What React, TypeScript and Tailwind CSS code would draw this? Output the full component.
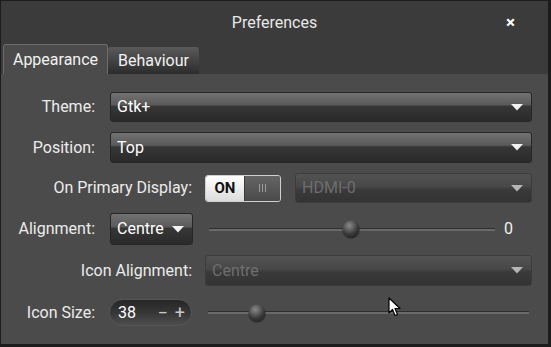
import React from "react";

const font = { fontFamily: "Roboto, 'Liberation Sans', sans-serif" };

function Arrow({ disabled }: { disabled?: boolean }) {
  return (
    <svg width="12" height="7" viewBox="0 0 12 7" className="shrink-0">
      <path d="M0 0 H12 L6 6.5 Z" fill={disabled ? "#b5b5b5" : "#f2f2f2"} />
    </svg>
  );
}

function Combo({ text, disabled, className }: { text: string; disabled?: boolean; className: string }) {
  return (
    <div
      className={`relative flex h-full items-center justify-between rounded-[3px] border pl-[6px] pr-[8px] ${
        disabled
          ? "border-[#3c3c3c] bg-[linear-gradient(#535353,#474747_45%,#3a3a3a_55%,#333333)] text-[#6e6e6e]"
          : "border-[#262626] bg-[linear-gradient(#727272,#5a5a5a_42%,#363636_48%,#2a2a2a)] text-white"
      } ${className}`}
    >
      <span className="text-[16px] leading-none">{text}</span>
      <Arrow disabled={disabled} />
    </div>
  );
}

function Slider({ pos, className }: { pos: number; className: string }) {
  return (
    <div className={`relative flex h-full items-center ${className}`}>
      <div className="h-[3px] w-full border-t border-[#2e2e2e] bg-[#6a6a6a]" />
      <div
        className="absolute top-1/2 h-[17px] w-[17px] -translate-x-1/2 -translate-y-1/2 rounded-full bg-[radial-gradient(circle_at_40%_30%,#8a8a8a,#3a3a3a_55%,#151515)] shadow-[0_1px_1px_rgba(0,0,0,0.6)]"
        style={{ left: `${pos}%` }}
      />
    </div>
  );
}

function Label({ text, w }: { text: string; w: string }) {
  return <div className={`${w} shrink-0 text-right text-[16px] text-[#ececec]`}>{text}</div>;
}

export default function App() {
  return (
    <div className="relative h-[347px] w-[551px] overflow-hidden bg-[#1c1c1c] p-[1px] pb-[3px] pr-[3px]" style={font}>
      <div className="flex h-full flex-col bg-[#3b3b3b]">
        {/* title */}
        <div className="relative flex h-[42px] items-center justify-center pt-[2px]">
          <span className="text-[16px] text-[#e8e8e8]">Preferences</span>
          <span className="absolute right-[33px] top-[13px] text-[17px] font-bold leading-none text-white">×</span>
        </div>

        {/* tabs */}
        <div className="flex items-end pl-[2px] pt-[1px]">
          <div className="flex h-[30px] w-[105px] items-center justify-center rounded-t-[3px] border border-b-0 border-[#6c6c6c] bg-[#4b4b4b] pt-[1px] text-[16px] text-[#f2f2f2]">
            Appearance
          </div>
          <div className="flex h-[27px] w-[91px] items-center justify-center rounded-t-[3px] bg-[linear-gradient(#5a5a5a,#2c2c2c)] text-[16px] text-[#f2f2f2]">
            Behaviour
          </div>
        </div>

        {/* content */}
        <div className="flex flex-1 flex-col gap-[10px] bg-[#4b4b4b] pr-[16px] pt-[18px]">
          <div className="flex h-[30px] items-center gap-[15px]">
            <Label text="Theme:" w="w-[94px]" />
            <Combo text="Gtk+" className="flex-1" />
          </div>
          <div className="flex h-[31px] items-center gap-[15px]">
            <Label text="Position:" w="w-[94px]" />
            <Combo text="Top" className="flex-1" />
          </div>
          <div className="flex h-[30px] items-center gap-[13px]">
            <Label text="On Primary Display:" w="w-[191px]" />
            <div className="flex h-[27px] w-[76px] shrink-0 overflow-hidden rounded-[3px] border border-[#d0d0d0]">
              <div className="flex w-[38px] items-center justify-center bg-[linear-gradient(#ffffff,#dcdcdc)] text-[15px] font-bold text-[#111]">
                ON
              </div>
              <div className="flex flex-1 items-center justify-center gap-[2px] border-l border-[#3a3a3a] bg-[linear-gradient(#646464,#4a4a4a)]">
                <span className="h-[8px] w-[1px] bg-[#9a9a9a]" />
                <span className="h-[8px] w-[1px] bg-[#9a9a9a]" />
                <span className="h-[8px] w-[1px] bg-[#9a9a9a]" />
              </div>
            </div>
            <div className="h-full flex-1 pl-[1px]">
              <Combo text="HDMI-0" disabled className="w-full" />
            </div>
          </div>
          <div className="flex h-[32px] items-center gap-[15px]">
            <Label text="Alignment:" w="w-[94px]" />
            <Combo text="Centre" className="w-[83px] shrink-0" />
            <Slider pos={49.5} className="ml-[1px] w-[286px] shrink-0" />
            <span className="ml-[-10px] pl-[4px] text-[16px] text-[#f0f0f0]">0</span>
          </div>
          <div className="flex h-[31px] items-center gap-[13px]">
            <Label text="Icon Alignment:" w="w-[191px]" />
            <Combo text="Centre" disabled className="flex-1" />
          </div>
          <div className="mt-[3px] flex h-[27px] items-center gap-[14px]">
            <Label text="Icon Size:" w="w-[94px]" />
            <div className="flex h-full w-[83px] shrink-0 items-center justify-between rounded-full border border-[#555] bg-[linear-gradient(#262626,#3a3a3a_60%,#4e4e4e)] pl-[8px] pr-[6px]">
              <span className="text-[16px] text-white">38</span>
              <span className="flex gap-[7px] text-[18px] leading-none text-[#c8c8c8]">
                <span>−</span>
                <span>+</span>
              </span>
            </div>
            <Slider pos={15} className="ml-[2px] flex-1 pr-[3px]" />
          </div>
        </div>
      </div>

      {/* mouse pointer */}
      <svg className="absolute left-[388px] top-[297px]" width="14" height="21" viewBox="0 0 14 21">
        <path d="M1 1 L1 16 L4.5 12.5 L7 18.5 L9.5 17.5 L7 11.5 L12 11.5 Z" fill="#fff" stroke="#000" strokeWidth="1.2" strokeLinejoin="round" />
      </svg>
    </div>
  );
}
